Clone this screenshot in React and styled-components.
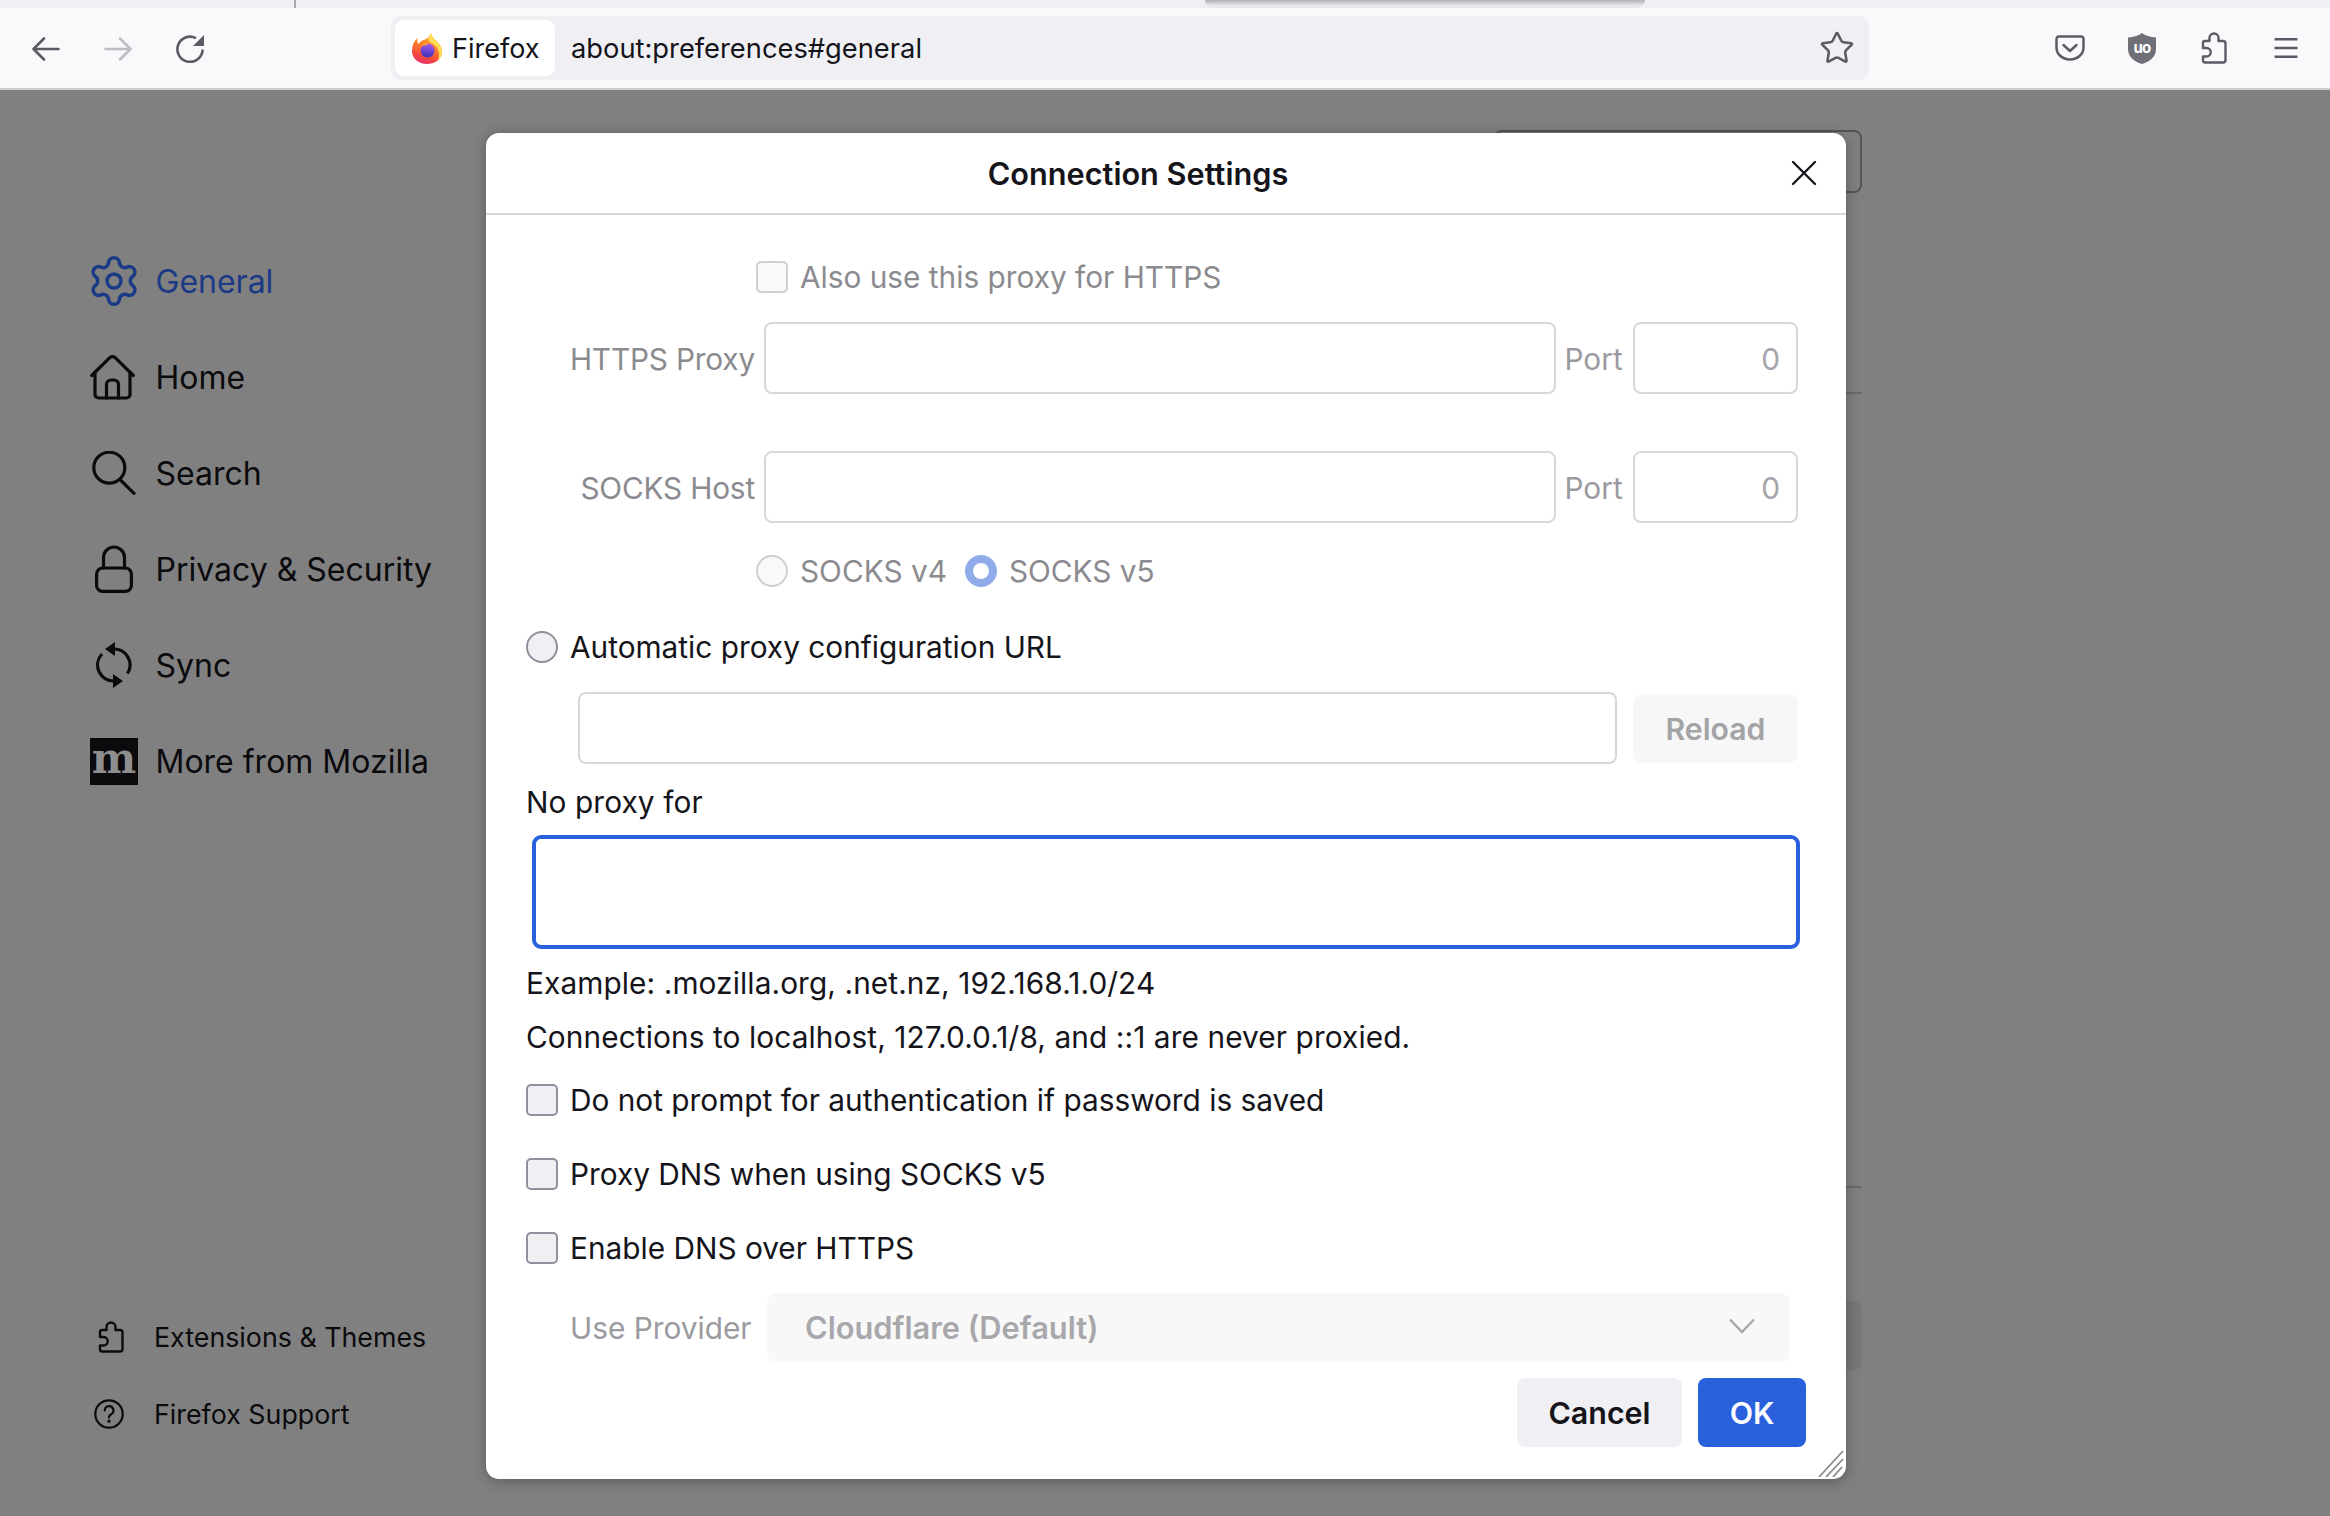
import React from "react";
import styled, { createGlobalStyle } from "styled-components";
import { Settings, Star } from "lucide-react";

const GlobalStyle = createGlobalStyle`
  html, body {
    margin: 0;
    padding: 0;
    background: #808080;
  }
  body {
    font-family: Inter, "Liberation Sans", sans-serif;
    color: #15141a;
  }
`;

const Page = styled.div`
  width: 2330px;
  height: 1516px;
  position: relative;
  overflow: hidden;
  display: flex;
  flex-direction: column;
  background: #808080;
`;

const TabStrip = styled.div`
  height: 8px;
  background: #f0f0f4;
  display: flex;
  padding-left: 294px;
`;

const TabDivider = styled.div`
  width: 2px;
  background: #a9a9ae;
`;

const TabShadow = styled.div`
  width: 440px;
  margin-left: 909px;
  background: linear-gradient(#b0b0b5, #e9e9ed 70%);
  border-radius: 0 0 8px 8px;
`;

const Toolbar = styled.div`
  height: 80px;
  background: #f9f9fb;
  border-bottom: 2px solid #cfcfd3;
  display: flex;
  align-items: center;
  padding: 0 8px 0 10px;
`;

const NavButton = styled.div`
  width: 72px;
  height: 72px;
  display: flex;
  align-items: center;
  justify-content: center;
  flex: none;
  margin-top: ${(p) => p.$shift || 0}px;
  color: ${(p) => (p.$dim ? "#bdbdc4" : "#5b5b66")};
`;

const UrlBar = styled.div`
  width: 1478px;
  height: 64px;
  margin: 0 165px;
  flex: none;
  box-sizing: border-box;
  padding: 4px 14px 4px 4px;
  background: #f0f0f4;
  border-radius: 10px;
  display: flex;
  align-items: center;
`;

const Identity = styled.div`
  width: 160px;
  height: 56px;
  box-sizing: border-box;
  padding: 1px 0 0 17px;
  background: #fff;
  border-radius: 9px;
  display: flex;
  align-items: center;
  gap: 10px;
  font-size: 27px;
`;

const UrlText = styled.div`
  margin-left: 16px;
  padding-top: 1px;
  font-size: 27.3px;
  flex: 1;
`;

const Content = styled.div`
  flex: 1;
  display: flex;
  min-height: 0;
`;

const Sidebar = styled.nav`
  width: 485px;
  flex: none;
  box-sizing: border-box;
  padding: 143px 0 77px 90px;
  display: flex;
  flex-direction: column;
  justify-content: space-between;
`;

const NavList = styled.div`
  display: flex;
  flex-direction: column;
`;

const NavItem = styled.div`
  height: 96px;
  display: flex;
  align-items: center;
  font-size: 32px;
  color: ${(p) => (p.$active ? "#1b3a85" : "#0b0a0d")};
`;

const NavIcon = styled.span`
  width: 65.5px;
  flex: none;
  display: flex;
  align-items: center;
  padding-left: ${(p) => p.$pad || 0}px;
  box-sizing: border-box;
`;

const MozillaMark = styled.span`
  width: 48px;
  height: 47px;
  box-sizing: border-box;
  padding-bottom: 5px;
  background: #0b0a0d;
  color: #8e8e8e;
  display: flex;
  align-items: center;
  justify-content: center;
  font-family: "DejaVu Serif", "Liberation Serif", serif;
  font-weight: 700;
  font-size: 42px;
  line-height: 42px;
`;

const FootList = styled.div`
  display: flex;
  flex-direction: column;
  gap: 27px;
`;

const FootItem = styled.div`
  height: 50px;
  display: flex;
  align-items: center;
  font-size: 26.8px;
  color: #0b0a0d;
`;

const FootIcon = styled.span`
  width: 64px;
  flex: none;
  display: flex;
  padding-left: ${(p) => p.$pad}px;
  box-sizing: border-box;
`;

const Backdrop = styled.div`
  flex: 1;
  display: flex;
  flex-direction: column;
  align-items: flex-end;
  padding: 40px 468px 0 0;
`;

const GhostButton = styled.div`
  width: 368px;
  height: 63px;
  box-sizing: border-box;
  border: 2px solid #545458;
  border-radius: 8px;
`;

const GhostRule = styled.div`
  width: 368px;
  height: 2px;
  background: #6a6a6a;
  margin-top: ${(p) => p.$top}px;
`;

const GhostFill = styled.div`
  width: 368px;
  height: 69px;
  margin-top: 113px;
  background: #777779;
  border-radius: 8px;
`;

const Dialog = styled.div`
  position: absolute;
  left: 486px;
  top: 133px;
  width: 1360px;
  height: 1346px;
  box-sizing: border-box;
  background: #fff;
  border-radius: 13px;
  box-shadow: 0 2px 14px rgba(0, 0, 0, 0.3);
  display: flex;
  flex-direction: column;
`;

const DialogHeader = styled.div`
  height: 80px;
  flex: none;
  position: relative;
  padding-right: 56px;
  border-bottom: 2px solid #d7d7db;
  display: flex;
  align-items: center;
  justify-content: center;
`;

const DialogTitle = styled.h1`
  margin: 1px 0 0;
  font-size: 30.7px;
  font-weight: 600;
  color: #15141a;
`;

const CloseButton = styled.span`
  position: absolute;
  left: 1305px;
  top: 27px;
  display: flex;
`;

const DialogBody = styled.div`
  padding-left: 40px;
  display: flex;
  flex-direction: column;
  font-size: 29.8px;
  position: relative;
  flex: 1;
`;

const OptionRow = styled.label`
  height: 32px;
  display: flex;
  align-items: center;
  margin-top: ${(p) => p.$top}px;
  padding-left: ${(p) => p.$indent || 0}px;
  gap: 12px;
  color: ${(p) => (p.$off ? "#8b8b8f" : "#15141a")};
`;

const Box = styled.span`
  width: 32px;
  height: 32px;
  flex: none;
  box-sizing: border-box;
  border-radius: ${(p) => (p.$round ? "50%" : "5px")};
  border: 2px solid ${(p) => (p.$off ? "#cfcfd3" : "#8f8f9d")};
  background: ${(p) => (p.$off ? "#f9f9fb" : "#f0f0f4")};
`;

const RadioOn = styled.span`
  width: 32px;
  height: 32px;
  flex: none;
  box-sizing: border-box;
  border-radius: 50%;
  border: 8px solid #8fabea;
  background: #fff;
`;

const RadioPair = styled.span`
  display: flex;
  align-items: center;
  gap: 12px;
  margin-right: 6px;
`;

const ProxyRow = styled.div`
  display: grid;
  grid-template-columns: 228px 792px 57px 165px;
  column-gap: 10px;
  align-items: center;
  height: 72px;
  margin-top: ${(p) => p.$top}px;
  color: #8b8b8f;
`;

const FieldLabel = styled.span`
  text-align: right;
  white-space: nowrap;
  margin-right: -1px;
  padding-top: 2px;
  letter-spacing: -0.18px;
`;

const Field = styled.div`
  height: 72px;
  box-sizing: border-box;
  border: 2px solid #d8d8da;
  border-radius: 8px;
  background: #fff;
  display: flex;
  align-items: center;
  justify-content: flex-end;
  padding: 2px 16px 0 0;
  color: #a4a4aa;
  width: ${(p) => (p.$width ? `${p.$width}px` : "auto")};
`;

const PortLabel = styled.span`
  color: #9a9aa0;
  white-space: nowrap;
  margin-left: -1.5px;
  padding-top: 2px;
`;

const AutoRow = styled.div`
  display: flex;
  align-items: flex-start;
  height: 72px;
  margin-top: 29px;
  padding-left: 52px;
  gap: 16px;
`;

const GhostAction = styled.div`
  width: 165px;
  height: 69px;
  margin-top: 2px;
  background: #f7f7f7;
  border-radius: 9px;
  color: #a4a4a6;
  font-weight: 600;
  display: flex;
  align-items: center;
  justify-content: center;
  font-size: 30.2px;
`;

const TextLine = styled.div`
  height: 36px;
  line-height: 36px;
  margin-top: ${(p) => p.$top}px;
  letter-spacing: 0.1px;
  white-space: nowrap;
`;

const FocusField = styled.div`
  width: 1268px;
  height: 114px;
  margin: 15px 0 0 6px;
  box-sizing: border-box;
  border: 4px solid #2a60dc;
  border-radius: 9px;
  background: #fff;
`;

const ProviderRow = styled.div`
  display: flex;
  align-items: center;
  height: 69px;
  margin-top: 29px;
  padding-left: 44px;
  color: #9a9aa0;
`;

const ProviderLabel = styled.span`
  width: 197px;
  flex: none;
`;

const ProviderSelect = styled.div`
  width: 1023px;
  height: 69px;
  box-sizing: border-box;
  padding: 0 35px 0 38px;
  border-radius: 9px;
  background: #f8f8f9;
  color: #a8a8ac;
  font-size: 30.8px;
  font-weight: 600;
  display: flex;
  align-items: center;
  justify-content: space-between;

  svg {
    margin-bottom: 3px;
  }
`;

const Footer = styled.div`
  display: flex;
  justify-content: flex-end;
  gap: 16px;
  margin-top: 16px;
  padding-right: 40px;
`;

const Button = styled.div`
  height: 69px;
  width: ${(p) => p.$width}px;
  border-radius: 8px;
  display: flex;
  align-items: center;
  justify-content: center;
  font-size: 30.4px;
  font-weight: 600;
  background: ${(p) => (p.$primary ? "#2a60dc" : "#f0f0f4")};
  color: ${(p) => (p.$primary ? "#fbfbfe" : "#15141a")};
`;

const Grip = styled.span`
  position: absolute;
  right: 2px;
  bottom: 2px;
  display: flex;
`;

const line = { fill: "none", stroke: "currentColor", strokeLinecap: "round", strokeLinejoin: "round" };

const Back = () => (
  <svg width="28" height="24" viewBox="0 0 28 24" {...line} strokeWidth="2.6">
    <path d="M26.5 12H2M12 1.5 1.5 12 12 22.5" />
  </svg>
);

const Forward = () => (
  <svg width="28" height="24" viewBox="0 0 28 24" {...line} strokeWidth="2.6">
    <path d="M1.5 12H26M16 1.5 26.5 12 16 22.5" />
  </svg>
);

const Reload = () => (
  <svg width="28" height="28" viewBox="0 0 28 28" {...line} strokeWidth="2.6" strokeLinecap="butt">
    <path d="M20 3.2A12.6 12.6 0 1 0 26.6 14.5" />
    <path d="M28 0v11H17z" fill="currentColor" stroke="none" />
  </svg>
);

const FirefoxLogo = () => (
  <svg width="30" height="31" viewBox="0 0 30 31">
    <defs>
      <linearGradient id="ffBody" x1="0.7" y1="0" x2="0.35" y2="1">
        <stop offset="0" stopColor="#ffb52e" />
        <stop offset="0.45" stopColor="#ff7d2b" />
        <stop offset="0.8" stopColor="#f0453f" />
        <stop offset="1" stopColor="#e8316f" />
      </linearGradient>
      <linearGradient id="ffGlobe" x1="0.6" y1="0" x2="0.4" y2="1">
        <stop offset="0" stopColor="#a65cf0" />
        <stop offset="1" stopColor="#3d2fb5" />
      </linearGradient>
    </defs>
    <path d="M5.500 5C5 8 5.500 10 6.500 11 8 8.500 10 7.500 13 6.500 15.500 5.500 17.500 3.500 19 0c.5 4 3.500 6 6 8.500 3.500 3.500 5 6.500 5 10C30 25.500 23.500 31 15 31S0 25.500 0 18C0 12.500 2 8 5.500 5z" fill="url(#ffBody)" />
    <path d="M19 0c.5 4 3.500 6 6 8.500 3.500 3.500 5 6.500 5 10 0 3.500-1.500 6.500-4 8.500 1.500-4 1.500-9.500-1.500-13-2.500-3-6.500-4-8-6.500C16 5 17.500 2.500 19 0z" fill="#ffdc55" />
    <circle cx="15.600" cy="17.600" r="7" fill="url(#ffGlobe)" />
    <path d="M9 12.500c2-3 6-4.500 9.500-2.500-2 0-3.500 1-4.500 2.500-2 0-3 .5-5 0z" fill="#ff9a2e" />
  </svg>
);

const Pocket = () => (
  <svg width="30" height="26" viewBox="0 0 30 26" {...line} strokeWidth="2.5">
    <path d="M4 1.500h22a2.500 2.500 0 0 1 2.500 2.500v8.500c0 6.800-6 12-13.500 12S1.500 19.300 1.500 12.500V4A2.500 2.500 0 0 1 4 1.500z" />
    <path d="m8.500 10 6.500 6 6.500-6" />
  </svg>
);

const Shield = () => (
  <svg width="28" height="31" viewBox="0 0 28 31">
    <path d="M14 0c3 2.500 8 4 14 4.500V16c0 7.500-6 12.500-14 15C6 28.500 0 23.500 0 16V4.500C6 4 11 2.500 14 0z" fill="#6f6f78" />
    <text x="14" y="20" textAnchor="middle" fontFamily="Inter, sans-serif" fontSize="15" fontWeight="700" fill="#fff" letterSpacing="-0.8">
      uo
    </text>
  </svg>
);

const Puzzle = ({ size = 26, stroke = 2.4 }) => (
  <svg width={size} height={(size * 32) / 26} viewBox="0 0 26 32" {...line} strokeWidth={stroke}>
    <path d="M2 24.500h3.500a4.200 4.200 0 0 0 0-8.500H2v-5a2 2 0 0 1 2-2h4.500V6a4.500 4.500 0 0 1 9 0v3H22a2.500 2.500 0 0 1 2.500 2.500V28a2.500 2.500 0 0 1-2.500 2.500H4A2 2 0 0 1 2 28.500z" />
  </svg>
);

const Menu = () => (
  <svg width="24" height="20" viewBox="0 0 24 20" fill="none" stroke="currentColor" strokeWidth="2.6">
    <path d="M.5 1.300h23M.5 10h23M.5 18.700h23" />
  </svg>
);

const Close = () => (
  <svg width="26" height="26" viewBox="0 0 26 26" fill="none" stroke="#15141a" strokeWidth="2.300" strokeLinecap="round">
    <path d="m2 2 22 22M24 2 2 24" />
  </svg>
);

const Home = () => (
  <svg width="45" height="45" viewBox="0 0 45 45" {...line} strokeWidth="3.200">
    <path d="M1.700 20.500 19.800 2.700a3.800 3.800 0 0 1 5.400 0l18.100 17.800" />
    <path d="M5 17v22.500a3.500 3.500 0 0 0 3.500 3.500h28a3.500 3.500 0 0 0 3.500-3.500V17" />
    <path d="M16.500 43V29.500a4.500 4.500 0 0 1 4.500-4.500h3a4.500 4.500 0 0 1 4.500 4.500V43" />
  </svg>
);

const Search = () => (
  <svg width="44" height="44" viewBox="0 0 44 44" {...line} strokeWidth="3.200">
    <circle cx="17.300" cy="16.700" r="15.500" />
    <path d="m29 29.500 13 12.800" />
  </svg>
);

const Lock = () => (
  <svg width="38" height="48" viewBox="0 0 38 48" {...line} strokeWidth="3.200">
    <rect x="1.600" y="23" width="34.800" height="23.400" rx="6" />
    <path d="M8.500 23V12.500a10.500 10.500 0 0 1 21 0V23" />
  </svg>
);

const Sync = () => (
  <svg width="36" height="48" viewBox="0 0 36 48" {...line} strokeWidth="3.200" strokeLinecap="butt">
    <path d="M18 8a16 16 0 0 1 13.500 24.500" />
    <path d="M18 40A16 16 0 0 1 6 13" />
    <path d="M9 8 19 1v14zM27 40l-10-7v14z" fill="currentColor" stroke="none" />
  </svg>
);

const Help = () => (
  <svg width="30" height="30" viewBox="0 0 30 30" {...line} strokeWidth="2.200">
    <circle cx="15" cy="15" r="13.700" />
    <path d="M10.800 11.500a4.300 4.300 0 1 1 6.300 3.800c-1.400.8-2.100 1.700-2.100 3.200" />
    <circle cx="15" cy="22.300" r=".6" fill="currentColor" />
  </svg>
);

const Chevron = () => (
  <svg width="26" height="16" viewBox="0 0 26 16" fill="none" stroke="#a8a8ac" strokeWidth="2.400">
    <path d="m1 1.500 12 12.500L25 1.500" />
  </svg>
);

const GripLines = () => (
  <svg width="26" height="27" viewBox="0 0 26 27" fill="none" stroke="#8a8a8a" strokeWidth="1.800">
    <path d="M1 27 25 1M8 27 25 9M15 27l9-10" />
  </svg>
);

const App = () => (
  <Page>
    <GlobalStyle />
    <TabStrip>
      <TabDivider />
      <TabShadow />
    </TabStrip>
    <Toolbar>
      <NavButton $shift={2}>
        <Back />
      </NavButton>
      <NavButton $shift={2} $dim>
        <Forward />
      </NavButton>
      <NavButton $shift={2}>
        <Reload />
      </NavButton>
      <UrlBar>
        <Identity>
          <FirefoxLogo />
          Firefox
        </Identity>
        <UrlText>about:preferences#general</UrlText>
        <Star size={36} strokeWidth={1.7} color="#5b5b66" />
      </UrlBar>
      <NavButton>
        <Pocket />
      </NavButton>
      <NavButton>
        <Shield />
      </NavButton>
      <NavButton>
        <Puzzle />
      </NavButton>
      <NavButton>
        <Menu />
      </NavButton>
    </Toolbar>
    <Content>
      <Sidebar>
        <NavList>
          <NavItem $active>
            <NavIcon>
              <Settings size={56} strokeWidth={1.5} style={{ margin: "0 -5px 0 -4.5px" }} />
            </NavIcon>
            General
          </NavItem>
          <NavItem>
            <NavIcon>
              <Home />
            </NavIcon>
            Home
          </NavItem>
          <NavItem>
            <NavIcon $pad={2}>
              <Search />
            </NavIcon>
            Search
          </NavItem>
          <NavItem>
            <NavIcon $pad={5}>
              <Lock />
            </NavIcon>
            Privacy &amp; Security
          </NavItem>
          <NavItem>
            <NavIcon $pad={6}>
              <Sync />
            </NavIcon>
            Sync
          </NavItem>
          <NavItem>
            <NavIcon>
              <MozillaMark>m</MozillaMark>
            </NavIcon>
            More from Mozilla
          </NavItem>
        </NavList>
        <FootList>
          <FootItem>
            <FootIcon $pad={8}>
              <Puzzle stroke={2.4} />
            </FootIcon>
            Extensions &amp; Themes
          </FootItem>
          <FootItem>
            <FootIcon $pad={4}>
              <Help />
            </FootIcon>
            Firefox Support
          </FootItem>
        </FootList>
      </Sidebar>
      <Backdrop>
        <GhostButton />
        <GhostRule $top={199} />
        <GhostRule $top={792} />
        <GhostFill />
      </Backdrop>
    </Content>

    <Dialog>
      <DialogHeader>
        <DialogTitle>Connection Settings</DialogTitle>
        <CloseButton>
          <Close />
        </CloseButton>
      </DialogHeader>
      <DialogBody>
        <OptionRow $top={46} $indent={230} $off>
          <Box $off />
          Also use this proxy for HTTPS
        </OptionRow>
        <ProxyRow $top={29}>
          <FieldLabel>HTTPS Proxy</FieldLabel>
          <Field />
          <PortLabel>Port</PortLabel>
          <Field>0</Field>
        </ProxyRow>
        <ProxyRow $top={57}>
          <FieldLabel>SOCKS Host</FieldLabel>
          <Field />
          <PortLabel>Port</PortLabel>
          <Field>0</Field>
        </ProxyRow>
        <OptionRow $top={32} $indent={230} $off>
          <RadioPair>
            <Box $off $round />
            SOCKS v4
          </RadioPair>
          <RadioPair>
            <RadioOn />
            SOCKS v5
          </RadioPair>
        </OptionRow>
        <OptionRow $top={44}>
          <Box $round />
          Automatic proxy configuration URL
        </OptionRow>
        <AutoRow>
          <Field $width={1039} />
          <GhostAction>Reload</GhostAction>
        </AutoRow>
        <TextLine $top={20}>No proxy for</TextLine>
        <FocusField />
        <TextLine $top={16}>Example: .mozilla.org, .net.nz, 192.168.1.0/24</TextLine>
        <TextLine $top={18}>Connections to localhost, 127.0.0.1/8, and ::1 are never proxied.</TextLine>
        <OptionRow $top={29}>
          <Box />
          Do not prompt for authentication if password is saved
        </OptionRow>
        <OptionRow $top={42}>
          <Box />
          Proxy DNS when using SOCKS v5
        </OptionRow>
        <OptionRow $top={42}>
          <Box />
          Enable DNS over HTTPS
        </OptionRow>
        <ProviderRow>
          <ProviderLabel>Use Provider</ProviderLabel>
          <ProviderSelect>
            Cloudflare (Default)
            <Chevron />
          </ProviderSelect>
        </ProviderRow>
        <Footer>
          <Button $width={165}>Cancel</Button>
          <Button $width={108} $primary>
            OK
          </Button>
        </Footer>
        <Grip>
          <GripLines />
        </Grip>
      </DialogBody>
    </Dialog>
  </Page>
);

export default App;
